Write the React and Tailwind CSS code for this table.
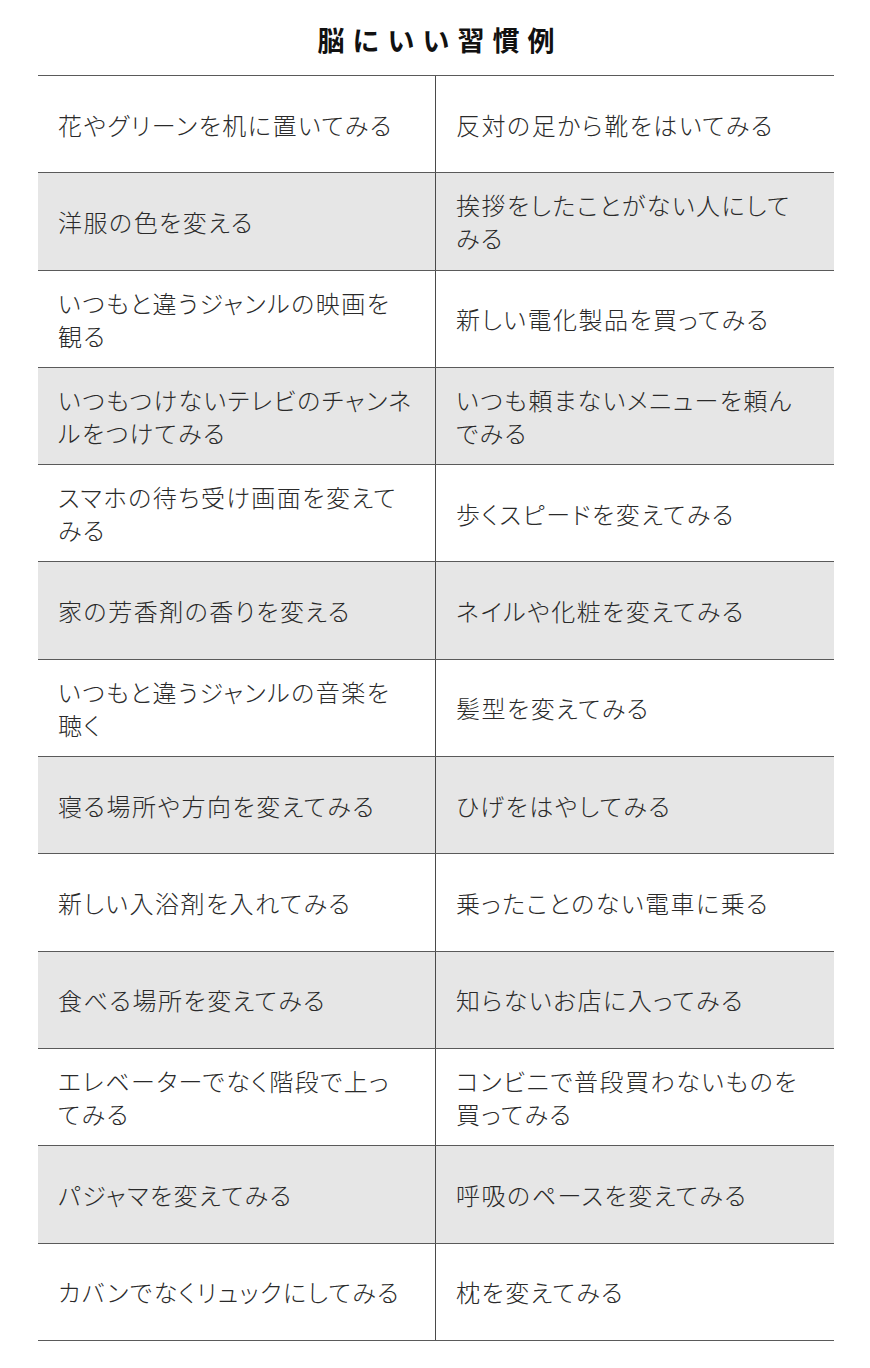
const rows = [
  [['花やグリーンを机に置いてみる'], ['反対の足から靴をはいてみる']],
  [['洋服の色を変える'], ['挨拶をしたことがない人にして', 'みる']],
  [['いつもと違うジャンルの映画を', '観る'], ['新しい電化製品を買ってみる']],
  [['いつもつけないテレビのチャンネ', 'ルをつけてみる'], ['いつも頼まないメニューを頼ん', 'でみる']],
  [['スマホの待ち受け画面を変えて', 'みる'], ['歩くスピードを変えてみる']],
  [['家の芳香剤の香りを変える'], ['ネイルや化粧を変えてみる']],
  [['いつもと違うジャンルの音楽を', '聴く'], ['髪型を変えてみる']],
  [['寝る場所や方向を変えてみる'], ['ひげをはやしてみる']],
  [['新しい入浴剤を入れてみる'], ['乗ったことのない電車に乗る']],
  [['食べる場所を変えてみる'], ['知らないお店に入ってみる']],
  [['エレベーターでなく階段で上っ', 'てみる'], ['コンビニで普段買わないものを', '買ってみる']],
  [['パジャマを変えてみる'], ['呼吸のペースを変えてみる']],
  [['カバンでなくリュックにしてみる'], ['枕を変えてみる']],
]

function Cell({ lines, left }) {
  return (
    <div
      className={
        'flex flex-col justify-center ' +
        (left ? 'pl-[20px] border-r border-[#4a4a4a]' : 'pl-[20px]')
      }
    >
      {lines.map((l, i) => (
        <p key={i} className="whitespace-nowrap leading-[33px]">
          {l}
        </p>
      ))}
    </div>
  )
}

export default function App() {
  return (
    <div
      className="w-[870px] h-[1368px] bg-white pl-[38px] pr-[36px] text-[#2a2a2a]"
      style={{ fontFamily: '"Noto Sans CJK JP", "Noto Sans", sans-serif' }}
    >
      <div className="h-[75px] flex items-center justify-center pt-[6px] pl-[8px]">
        <h1 className="text-[27px] font-bold tracking-[8px] text-[#111]">脳にいい習慣例</h1>
      </div>
      <div className="border-t border-[#5a5a5a] text-[24px] tracking-[1.5px] font-light [font-feature-settings:'palt']">
        {rows.map((r, i) => (
          <div
            key={i}
            className={
              'grid grid-cols-2 h-[97.3px] border-b border-[#5a5a5a] ' +
              (i % 2 === 1 ? 'bg-[#e6e6e6]' : 'bg-white')
            }
          >
            <Cell lines={r[0]} left />
            <Cell lines={r[1]} />
          </div>
        ))}
      </div>
    </div>
  )
}
